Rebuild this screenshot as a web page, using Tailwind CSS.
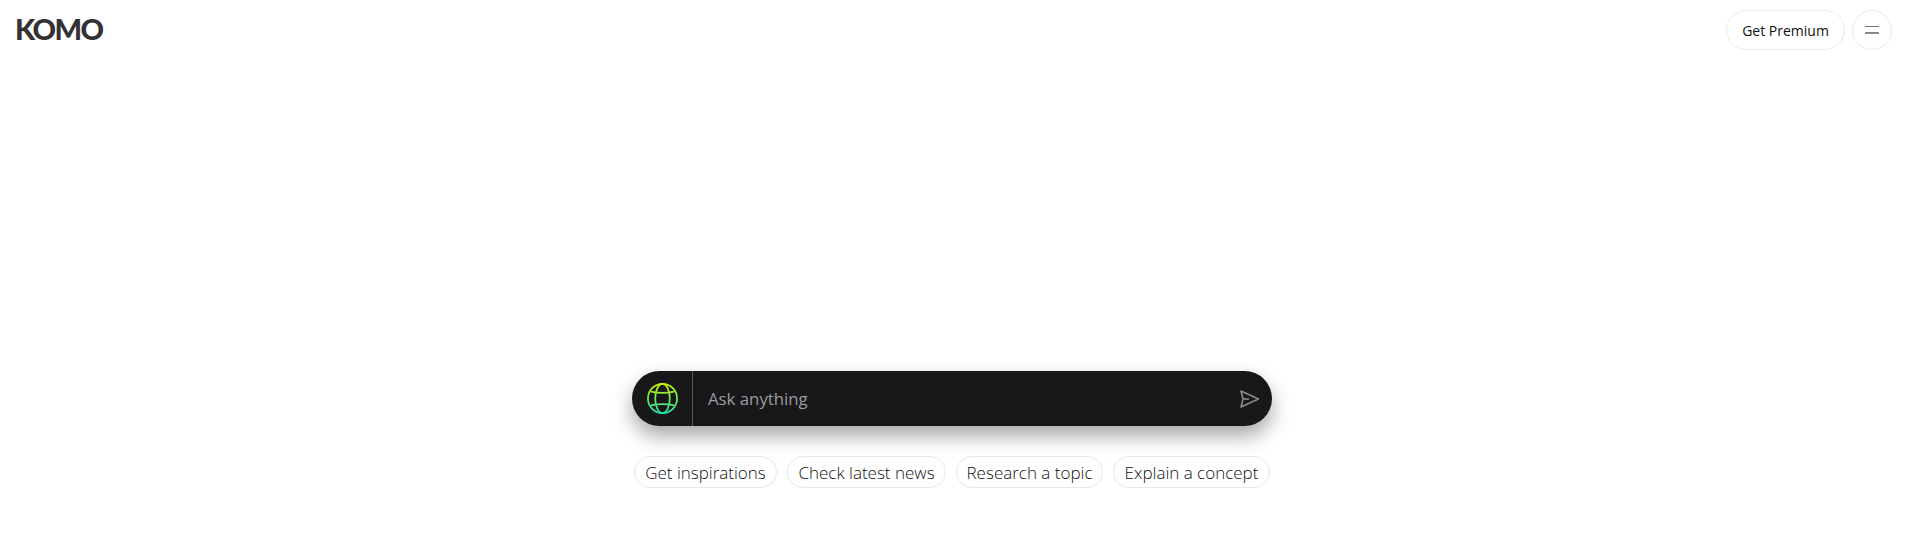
<html lang="en">
    <head>
        <meta charset="UTF-8">
        <script src="https://cdn.jsdelivr.net/npm/@tailwindcss/browser@4"></script>
        <title>Komo</title>
    </head>
    <body class="h-screen w-screen bg-white flex flex-col overflow-hidden font-['Open_Sans',sans-serif]">
        <!-- Top Bar -->
        <div class="h-[49px] mt-[10px] pl-[15px] pr-[13px] flex items-start justify-between">
            <h1 class="mt-[-1px] text-[29px] leading-[40px] font-black tracking-[-1.6px] text-[#333134] font-['Lato',sans-serif]">KOMO</h1>
            <div class="flex items-center gap-[7px]">
                <button class="h-[40px] w-[119px] rounded-full border border-[#ebebeb] text-[14px] text-[#111] bg-white">Get Premium</button>
                <button class="h-[40px] w-[40px] rounded-full border border-[#ebebeb] bg-white flex flex-col items-center justify-center gap-[5px]">
                    <span class="block w-[14px] h-[1px] bg-[#777]"></span>
                    <span class="block w-[14px] h-[2px] bg-[#888]"></span>
                </button>
            </div>
        </div>
        <!-- Search -->
        <div class="flex flex-col items-center pt-[312px] pr-[1px]">
            <div class="w-[640px] h-[55px] rounded-full bg-[#18181a] flex items-center shadow-[0_10px_20px_rgba(0,0,0,0.35)]">
                <div class="w-[61px] h-full border-r border-[#555] flex items-center justify-center">
                    <svg class="ml-[1px]" width="33" height="33" viewBox="0 0 34 34" fill="none" stroke="url(#globe)" stroke-width="1.8">
                        <defs>
                            <linearGradient id="globe" gradientUnits="userSpaceOnUse" x1="17" y1="2" x2="17" y2="32">
                                <stop offset="0" stop-color="#c6f500"/>
                                <stop offset="1" stop-color="#20dfa8"/>
                            </linearGradient>
                        </defs>
                        <circle cx="17" cy="17" r="15"/>
                        <ellipse cx="17" cy="17" rx="7.5" ry="15"/>
                        <path d="M5 10C12 11.5 22 11.5 29 10M5 24C12 22.5 22 22.5 29 24"/>
                    </svg>
                </div>
                <span class="ml-[15px] text-[16.8px] text-[#9b9ba0] grow">Ask anything</span>
                <svg class="mr-[12px]" width="22" height="20" viewBox="0 0 22 20" fill="none" stroke="#8a8a8d" stroke-width="1.6" stroke-linejoin="round">
                    <path d="M3 2L20.5 10L3 18L5 10Z"/>
                    <path d="M5 10H11"/>
                </svg>
            </div>
            <div class="mt-[30px] w-[640px] pl-[2px] flex gap-[10px]">
                <span class="h-[32px] w-[143px] pt-[1px] rounded-full border border-[#e8e8e8] text-[17px] font-light text-[#111] flex items-center justify-center">Get inspirations</span>
                <span class="h-[32px] w-[159px] pt-[1px] rounded-full border border-[#e8e8e8] text-[17px] font-light text-[#111] flex items-center justify-center">Check latest news</span>
                <span class="h-[32px] w-[147px] pt-[1px] rounded-full border border-[#e8e8e8] text-[17px] font-light text-[#111] flex items-center justify-center">Research a topic</span>
                <span class="h-[32px] w-[157px] pt-[1px] rounded-full border border-[#e8e8e8] text-[17px] font-light text-[#111] flex items-center justify-center">Explain a concept</span>
            </div>
        </div>
    </body>
</html>
